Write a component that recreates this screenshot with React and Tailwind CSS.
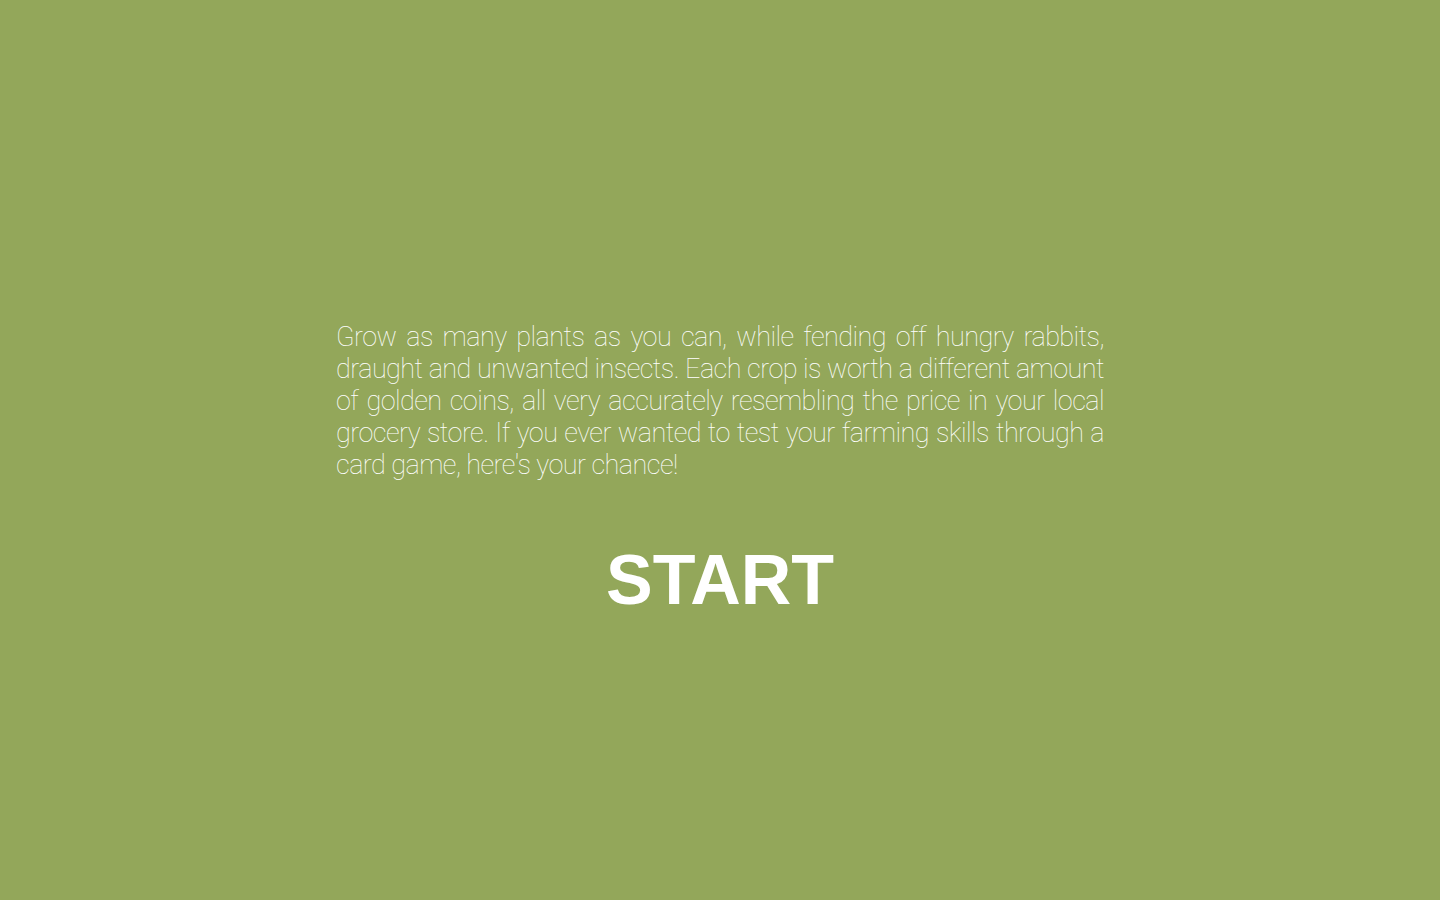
export default function App() {
  return (
    <div className="w-screen h-screen bg-[#93a75a] flex flex-col items-center justify-center pt-[36px] font-['Roboto',sans-serif]">
      <p className="w-[768px] text-white text-[27px] leading-[32px] font-thin text-justify tracking-[-0.55px]">
        Grow as many plants as you can, while fending off hungry rabbits, draught and unwanted insects. Each crop is worth a different amount of golden coins, all very accurately resembling the price in your local grocery store. If you ever wanted to test your farming skills through a card game, here's your chance!
      </p>
      <button className="mt-[64px] text-white text-[70px] leading-none font-bold font-['Liberation_Sans',Arial,sans-serif]">
        START
      </button>
    </div>
  );
}
